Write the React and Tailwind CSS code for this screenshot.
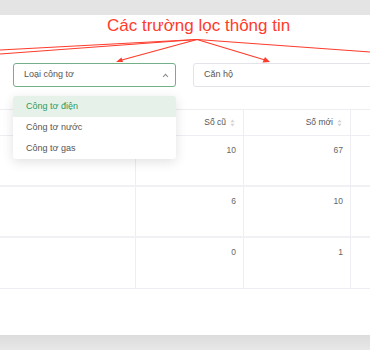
import React from "react";

const rows = [
  { old: "10", next: "67" },
  { old: "6", next: "10" },
  { old: "0", next: "1" },
];

function SortIcon() {
  return (
    <svg width="5" height="8" viewBox="0 0 5 8" className="ml-[4px] shrink-0">
      <path d="M2.5 0.5 L4.6 3.2 L0.4 3.2 Z" fill="#d4d4d8" />
      <path d="M2.5 7.5 L4.6 4.8 L0.4 4.8 Z" fill="#d4d4d8" />
    </svg>
  );
}

export default function App() {
  return (
    <div className="relative h-[350px] w-[370px] overflow-hidden bg-white font-['Liberation_Sans',Arial,sans-serif]">
      <div className="h-[15px] bg-[#e4e4e4]" />

      <div className="h-[320px] bg-white">
        {/* tiêu đề chú thích */}
        <div className="pl-[107px] pt-[1px] text-[17px] leading-[20px] text-[#ff3b2b]">
          Các trường lọc thông tin
        </div>

        {/* các ô lọc */}
        <div className="mt-[27px] flex gap-[17px] pl-[13px]">
          <div className="flex h-[24px] w-[163px] shrink-0 items-center justify-between rounded-[3px] border border-[#73b08a] pl-[10px] pr-[6px] text-[9px] text-[#555]">
            <span>Loại công tơ</span>
            <svg width="7" height="5" viewBox="0 0 7 5">
              <path d="M1 4 L3.5 1.3 L6 4" fill="none" stroke="#8a8a8a" strokeWidth="1.1" />
            </svg>
          </div>
          <div className="flex h-[24px] w-[180px] shrink-0 items-center rounded-[3px] border border-[#e3e3ea] pl-[10px] text-[9px] text-[#555]">
            Căn hộ
          </div>
        </div>

        {/* bảng */}
        <div className="mt-[22px] border-t border-[#ededf2] text-[8.5px] text-[#666]">
          <div className="grid h-[26px] grid-cols-[136px_108px_107px_1fr] border-b border-[#ededf2]">
            <div className="border-r border-[#ededf2]" />
            <div className="flex items-center justify-end border-r border-[#ededf2] pr-[8px] text-[#555]">
              Số cũ
              <SortIcon />
            </div>
            <div className="flex items-center justify-end border-r border-[#ededf2] pr-[8px] text-[#555]">
              Số mới
              <SortIcon />
            </div>
            <div />
          </div>
          {rows.map((r, i) => (
            <div
              key={i}
              className="grid h-[51px] grid-cols-[136px_108px_107px_1fr] border-b-2 border-[#f1f1f5] last:border-b last:border-[#ededf2]"
            >
              <div className="border-r border-[#ededf2]" />
              <div className="border-r border-[#ededf2] pr-[7px] pt-[8px] text-right">{r.old}</div>
              <div className="border-r border-[#ededf2] pr-[7px] pt-[8px] text-right">{r.next}</div>
              <div />
            </div>
          ))}
        </div>
      </div>

      <div className="h-[15px] bg-gradient-to-b from-[#dcdcdc] to-[#e8e8e8]" />

      {/* danh sách thả xuống */}
      <div className="absolute left-[13px] top-[96px] w-[163px] overflow-hidden rounded-[3px] bg-white text-[9px] shadow-[0_3px_12px_rgba(0,0,0,0.12)]">
        <div className="flex h-[21px] items-center bg-[#e6f1ea] pl-[13px] text-[#2f9a5b]">Công tơ điện</div>
        <div className="flex h-[21px] items-center pl-[13px] text-[#555]">Công tơ nước</div>
        <div className="flex h-[21px] items-center pl-[13px] text-[#555]">Công tơ gas</div>
      </div>

      {/* mũi tên chú thích */}
      <svg className="pointer-events-none absolute left-0 top-0" width="370" height="70" viewBox="0 0 370 70">
        <g stroke="#ff3b2b" strokeWidth="1.2" fill="none">
          <line x1="197" y1="39.5" x2="0" y2="50" />
          <line x1="197" y1="39.5" x2="0" y2="54" />
          <line x1="197" y1="39.5" x2="370" y2="52" />
          <line x1="197" y1="39.5" x2="120" y2="60.5" />
          <line x1="197" y1="39.5" x2="265" y2="60" />
        </g>
        <path d="M116 62 L121.5 57.5 L123 62 Z" fill="#ff3b2b" />
        <path d="M270 62 L262.5 62.5 L265 57 Z" fill="#ff3b2b" />
      </svg>
    </div>
  );
}
